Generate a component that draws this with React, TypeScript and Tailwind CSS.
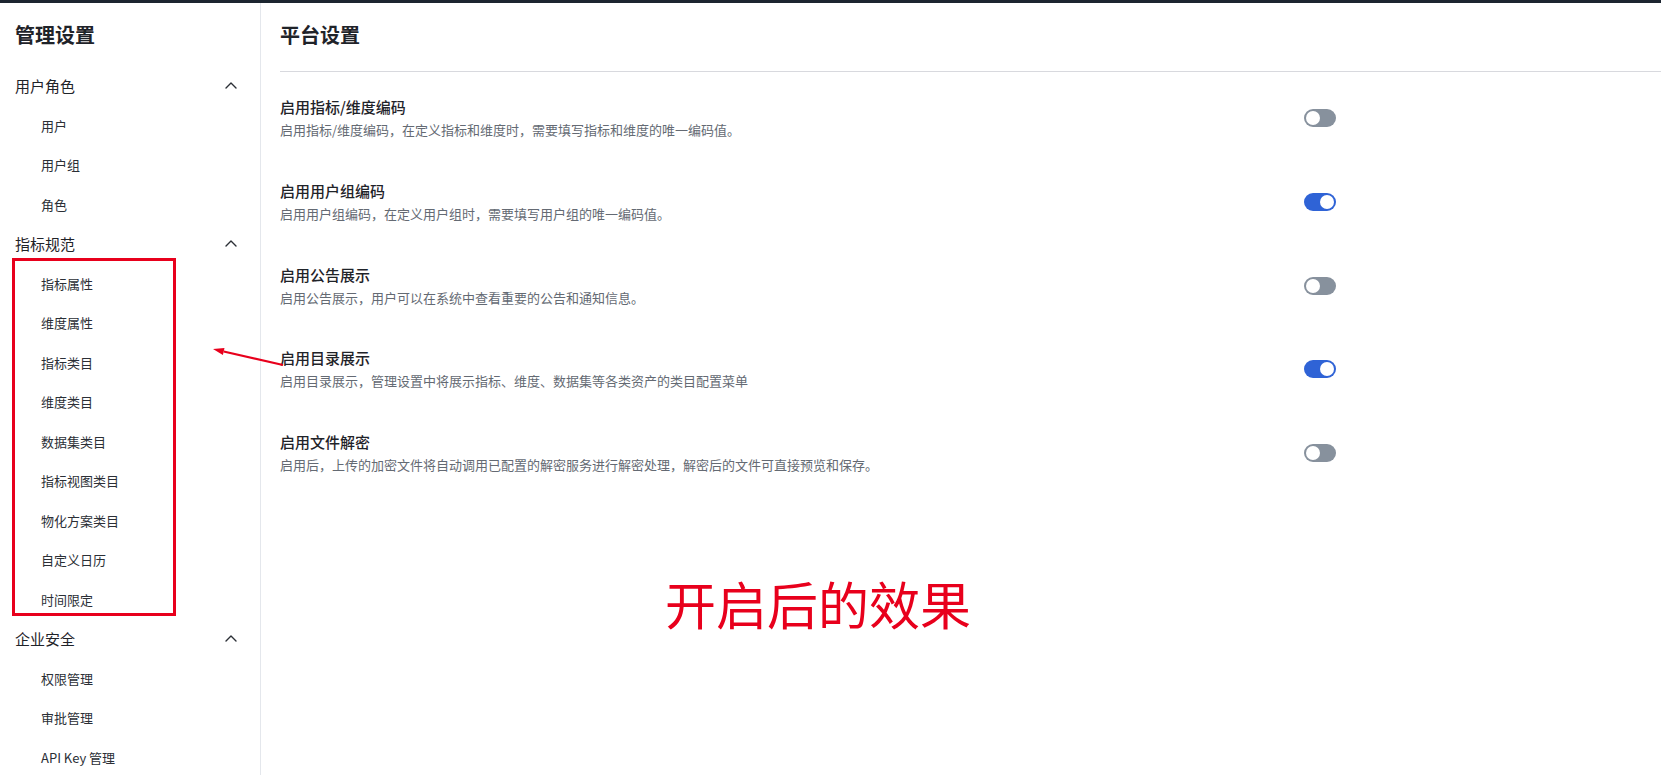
import React, { useState } from 'react'

const FONT = '"Noto Sans CJK SC", "Noto Sans", sans-serif'

interface NavGroup {
  title: string
  items: string[]
}

const groups: NavGroup[] = [
  { title: '用户角色', items: ['用户', '用户组', '角色'] },
  {
    title: '指标规范',
    items: ['指标属性', '维度属性', '指标类目', '维度类目', '数据集类目', '指标视图类目', '物化方案类目', '自定义日历', '时间限定'],
  },
  { title: '企业安全', items: ['权限管理', '审批管理', 'API Key 管理'] },
]

interface Setting {
  key: string
  title: string
  desc: string
  on: boolean
}

const initialSettings: Setting[] = [
  { key: 'code', title: '启用指标/维度编码', desc: '启用指标/维度编码，在定义指标和维度时，需要填写指标和维度的唯一编码值。', on: false },
  { key: 'group', title: '启用用户组编码', desc: '启用用户组编码，在定义用户组时，需要填写用户组的唯一编码值。', on: true },
  { key: 'notice', title: '启用公告展示', desc: '启用公告展示，用户可以在系统中查看重要的公告和通知信息。', on: false },
  { key: 'catalog', title: '启用目录展示', desc: '启用目录展示，管理设置中将展示指标、维度、数据集等各类资产的类目配置菜单', on: true },
  { key: 'decrypt', title: '启用文件解密', desc: '启用后，上传的加密文件将自动调用已配置的解密服务进行解密处理，解密后的文件可直接预览和保存。', on: false },
]

const Chevron = () => (
  <svg width="12" height="7" viewBox="0 0 12 7" fill="none">
    <polyline points="1,6 6,1 11,6" stroke="#2b2f36" strokeWidth="1.4" strokeLinecap="round" strokeLinejoin="round" />
  </svg>
)

const Toggle = ({ on, onClick }: { on: boolean; onClick: () => void }) => (
  <button
    type="button"
    onClick={onClick}
    className={`relative w-[32px] h-[18px] rounded-full shrink-0 ${on ? 'bg-[#2f63d6]' : 'bg-[#87919d]'}`}
  >
    <span
      className={`absolute top-[2px] w-[14px] h-[14px] rounded-full bg-white ${on ? 'left-[16px]' : 'left-[2px]'}`}
    />
  </button>
)

export default function App() {
  const [settings, setSettings] = useState(initialSettings)

  const toggle = (key: string) =>
    setSettings(s => s.map(it => (it.key === key ? { ...it, on: !it.on } : it)))

  return (
    <div className="relative w-full h-[775px] overflow-hidden bg-white" style={{ fontFamily: FONT }}>
      <div className="h-[3px] bg-[#1c2530]" />
      <div className="flex h-[772px]">
        {/* Sidebar */}
        <aside className="w-[261px] shrink-0 border-r border-[#e4e7ec]">
          <h1 className="pt-[18px] pl-[15px] text-[20px] leading-[28px] font-semibold text-[#1f2329]">管理设置</h1>
          <nav className="mt-[17px]">
            {groups.map(g => (
              <div key={g.title}>
                <div className="h-[39.5px] flex items-center justify-between pl-[15px] pr-[23px] text-[15px] text-[#1f2329]">
                  <span>{g.title}</span>
                  <Chevron />
                </div>
                {g.items.map(item => (
                  <div key={item} className="h-[39.5px] flex items-center pl-[41px] text-[13px] text-[#2b2f36]">
                    {item}
                  </div>
                ))}
              </div>
            ))}
          </nav>
        </aside>

        {/* Main */}
        <main className="flex-1 pl-[19px]">
          <h2 className="pt-[18px] text-[20px] leading-[28px] font-semibold text-[#1f2329]">平台设置</h2>
          <div className="mt-[22px] border-t border-[#d8d9de]" />
          <div className="pt-[24px] flex flex-col gap-[39.75px]">
            {settings.map(s => (
              <div key={s.key} className="w-[1056px] flex items-center justify-between">
                <div>
                  <div className="text-[15px] leading-[22px] font-medium text-[#1f2329]">{s.title}</div>
                  <div className="mt-[2px] text-[13px] leading-[20px] text-[#646a73]">{s.desc}</div>
                </div>
                <Toggle on={s.on} onClick={() => toggle(s.key)} />
              </div>
            ))}
          </div>
        </main>
      </div>

      {/* Red annotations */}
      <div className="absolute left-[12px] top-[258px] w-[164px] h-[358px] border-[3px] border-[#e8001c] pointer-events-none" />
      <svg className="absolute left-[205px] top-[340px] pointer-events-none" width="85" height="30" viewBox="0 0 85 30">
        <line x1="78" y1="25" x2="18.7" y2="11.45" stroke="#e8001c" strokeWidth="2.2" />
        <polygon points="8,9 19.5,8 17.9,14.9" fill="#e8001c" />
      </svg>
      <div className="absolute left-[665px] top-[578px] text-[51px] leading-[51px] text-[#e8001c] whitespace-nowrap">
        开启后的效果
      </div>
    </div>
  )
}
